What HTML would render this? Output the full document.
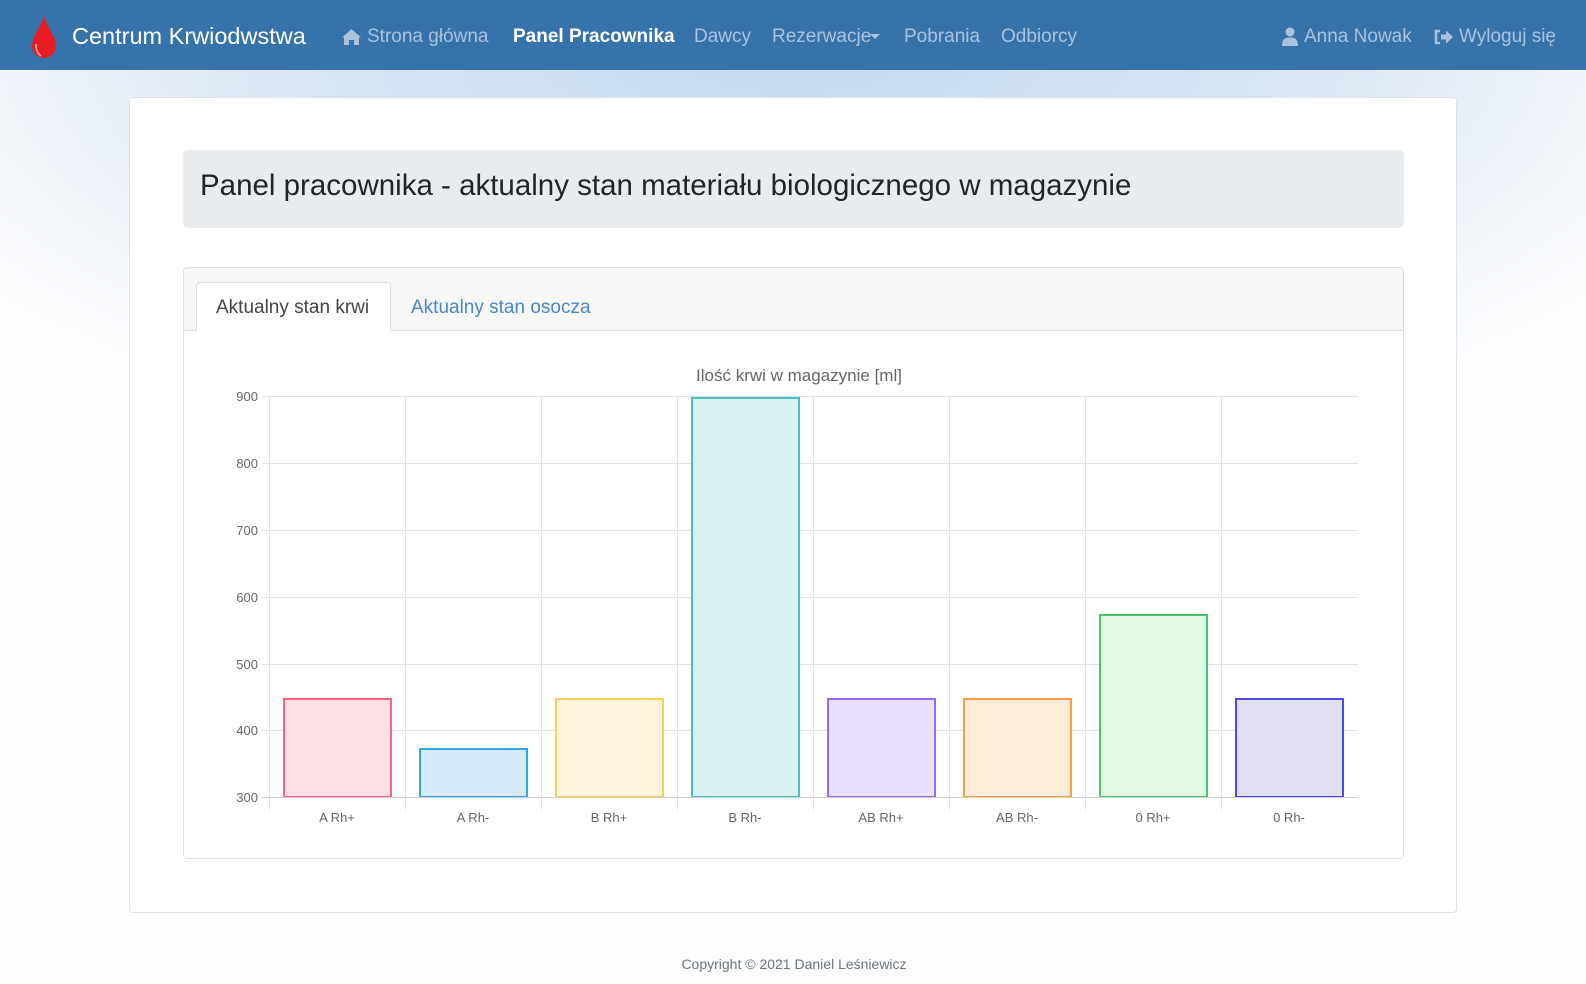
<!DOCTYPE html>
<html><head><meta charset="utf-8"><style>
*{margin:0;padding:0;box-sizing:border-box}
body{width:1586px;height:984px;overflow:hidden;font-family:"Liberation Sans",sans-serif;position:relative;
background:radial-gradient(ellipse 1000px 430px at 793px 40px,#c3d9ef 0%,#d6e4f3 45%,#f1f5fa 80%,#fdfdfe 100%);}
.nav{position:absolute;left:0;top:0;width:1586px;height:70px;background:#3673ab}
.nav span{position:absolute;top:26px;font-size:19px;color:#a9c3de;white-space:nowrap}
.abs{position:absolute}
</style></head><body>
<div class="nav">
<svg class="abs" style="left:28px;top:14px" width="32" height="46" viewBox="0 0 32 46"><path d="M16 1 C14 12 4 22 4 32 A12 12 0 0 0 28 32 C28 22 18 12 16 1Z" fill="#e81c24"/><path d="M8 30 C8 36 10 40 13 42" stroke="#f7a0a0" stroke-width="1.5" fill="none"/></svg>
<span style="left:72px;color:#fff;font-size:23.5px;top:23px">Centrum Krwiodwstwa</span>
<svg class="abs" style="left:341px;top:28px" width="21" height="18" viewBox="0 0 21 18"><path d="M10.5 1 L1 9.5 L3 9.5 L3 17 L8 17 L8 12 L13 12 L13 17 L18 17 L18 9.5 L20 9.5 Z" fill="#a9c3de"/></svg>
<span style="left:367px">Strona główna</span>
<span style="left:513px;color:#fff;font-weight:bold">Panel Pracownika</span>
<span style="left:694px">Dawcy</span>
<span style="left:772px">Rezerwacje</span>
<svg class="abs" style="left:870px;top:34px" width="10" height="6"><path d="M0 0 L10 0 L5 5Z" fill="#a9c3de"/></svg>
<span style="left:904px">Pobrania</span>
<span style="left:1001px">Odbiorcy</span>
<svg class="abs" style="left:1281px;top:27px" width="18" height="19" viewBox="0 0 18 19"><circle cx="9" cy="5" r="4.5" fill="#a9c3de"/><path d="M1 19 C1 12 4 10.5 9 10.5 C14 10.5 17 12 17 19Z" fill="#a9c3de"/></svg>
<span style="left:1304px">Anna Nowak</span>
<svg class="abs" style="left:1434px;top:29px" width="20" height="16" viewBox="0 0 20 16"><path d="M6 2 H2 V14 H6" stroke="#a9c3de" stroke-width="2.5" fill="none"/><path d="M7 5.5 H12 V1.5 L19 8 L12 14.5 V10.5 H7Z" fill="#a9c3de"/></svg>
<span style="left:1459px">Wyloguj się</span>
</div>
<div class="abs" style="left:129px;top:97px;width:1328px;height:816px;background:#fff;border:1px solid #dfe3e8;border-radius:4px"></div>
<div class="abs" style="left:183px;top:150px;width:1221px;height:78px;background:#e9ecef;border-radius:5px"></div>
<div class="abs" style="left:200px;top:169px;font-size:29.5px;color:#212529;white-space:nowrap">Panel pracownika - aktualny stan materiału biologicznego w magazynie</div>
<div class="abs" style="left:183px;top:267px;width:1221px;height:592px;border:1px solid #dfdfdf;border-radius:4px;background:#fff;overflow:hidden">
 <div style="height:63px;background:#f7f7f7;border-bottom:1px solid #dcdcdc"></div>
</div>
<div class="abs" style="left:196px;top:282px;width:195px;height:49px;background:#fff;border:1px solid #dcdcdc;border-bottom:none;border-radius:4px 4px 0 0"></div>
<div class="abs" style="left:216px;top:297px;font-size:19px;color:#444">Aktualny stan krwi</div>
<div class="abs" style="left:411px;top:297px;font-size:19px;color:#4a86c8">Aktualny stan osocza</div>
<svg class="abs" style="left:0;top:0" width="1586" height="984" font-family="Liberation Sans, sans-serif">
<text x="799" y="381" font-size="17" fill="#666" text-anchor="middle">Ilość krwi w magazynie [ml]</text>
<g stroke="#e2e2e2" stroke-width="1">
<line x1="262" y1="396.5" x2="1358" y2="396.5"/><line x1="262" y1="463.5" x2="1358" y2="463.5"/><line x1="262" y1="530.5" x2="1358" y2="530.5"/><line x1="262" y1="597.5" x2="1358" y2="597.5"/><line x1="262" y1="664.5" x2="1358" y2="664.5"/><line x1="262" y1="730.5" x2="1358" y2="730.5"/>
<line x1="269.5" y1="396" x2="269.5" y2="810"/><line x1="405.5" y1="396" x2="405.5" y2="810"/><line x1="541.5" y1="396" x2="541.5" y2="810"/><line x1="677.5" y1="396" x2="677.5" y2="810"/><line x1="813.5" y1="396" x2="813.5" y2="810"/><line x1="949.5" y1="396" x2="949.5" y2="810"/><line x1="1085.5" y1="396" x2="1085.5" y2="810"/><line x1="1221.5" y1="396" x2="1221.5" y2="810"/>
</g>
<g font-size="13" fill="#666" text-anchor="end">
<text x="258" y="401">900</text><text x="258" y="468">800</text><text x="258" y="535">700</text><text x="258" y="602">600</text><text x="258" y="669">500</text><text x="258" y="735">400</text><text x="258" y="802">300</text>
</g>
<g stroke-width="2">
<rect x="284" y="699" width="107" height="98" fill="#ffe0e6" stroke="#ff6384"/>
<rect x="420" y="749" width="107" height="48" fill="#d7ecfb" stroke="#36a2eb"/>
<rect x="556" y="699" width="107" height="98" fill="#fff5dd" stroke="#ffcd56"/>
<rect x="692" y="398" width="107" height="399" fill="#dbf2f2" stroke="#4bc0c0"/>
<rect x="828" y="699" width="107" height="98" fill="#ebe0ff" stroke="#9966ff"/>
<rect x="964" y="699" width="107" height="98" fill="#ffecd9" stroke="#ff9f40"/>
<rect x="1100" y="615" width="107" height="182" fill="#e3fbe6" stroke="#4dc36a"/>
<rect x="1236" y="699" width="107" height="98" fill="#e0e0f2" stroke="#4a4ae0"/>
</g>
<line x1="262" y1="797.5" x2="1358" y2="797.5" stroke="#cfcfcf"/>
<g font-size="13" fill="#666" text-anchor="middle">
<text x="337" y="822">A Rh+</text><text x="473" y="822">A Rh-</text><text x="609" y="822">B Rh+</text><text x="745" y="822">B Rh-</text><text x="881" y="822">AB Rh+</text><text x="1017" y="822">AB Rh-</text><text x="1153" y="822">0 Rh+</text><text x="1289" y="822">0 Rh-</text>
</g>
<text x="794" y="969" font-size="14" fill="#6c757d" text-anchor="middle">Copyright © 2021 Daniel Leśniewicz</text>
</svg>
</body></html>
